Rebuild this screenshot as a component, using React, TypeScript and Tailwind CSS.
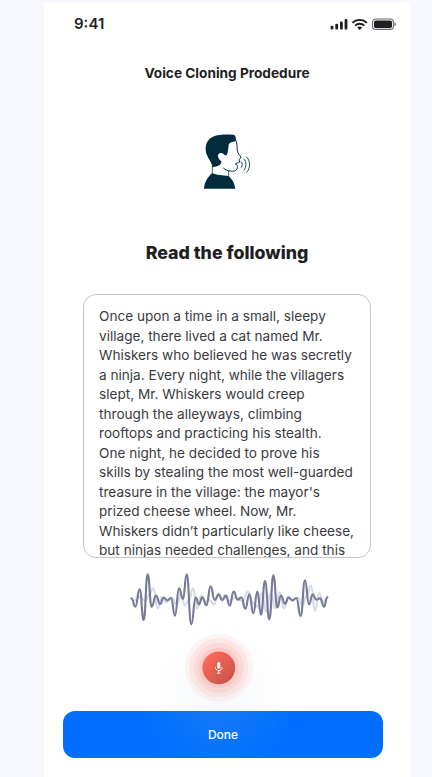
type Point = [number, number];

const mainWave: Point[] = [
  [34, 100], [46, 125], [59, 73], [71, 165], [83, 28], [95, 125], [108, 92], [120, 117], [131, 98], [142, 106],
  [153, 99], [165, 152], [177, 70], [189, 102], [200, 28], [214, 178], [227, 98], [237, 118], [247, 97], [259, 121],
  [272, 64], [284, 105], [296, 89], [307, 105], [318, 92], [329, 122], [341, 80], [353, 104], [364, 97], [376, 131],
  [388, 88], [400, 145], [412, 80], [423, 149], [435, 48], [448, 163], [460, 31], [472, 127], [483, 92], [495, 116],
  [506, 98], [517, 106], [529, 99], [542, 153], [555, 46], [567, 118], [578, 88], [589, 104], [600, 100], [612, 125], [622, 97],
];

const echoWave: Point[] = [
  [40, 108], [60, 95], [75, 108], [87, 90], [100, 70], [113, 130], [125, 97], [138, 112], [155, 98], [170, 118],
  [183, 90], [195, 120], [207, 105], [219, 70], [232, 130], [243, 92], [256, 112], [268, 105], [282, 118], [296, 85],
  [306, 108], [314, 90], [326, 108], [346, 98], [366, 108], [384, 80], [398, 112], [412, 125], [427, 85], [438, 140],
  [452, 85], [466, 130], [479, 83], [492, 130], [504, 95], [516, 106], [535, 98], [547, 120], [560, 92], [573, 62],
  [585, 138], [597, 85], [610, 112], [620, 100],
];

function wavePath(points: Point[]) {
  return points
    .map(([x, y], i) => {
      if (i === 0) return `M${x} ${y}`;
      const [px, py] = points[i - 1];
      const mid = (px + x) / 2;
      return `C${mid} ${py} ${mid} ${y} ${x} ${y}`;
    })
    .join("");
}

function StatusIcons() {
  return (
    <svg className="mt-[15px] h-[14px] w-[68px]" viewBox="0 0 68 14" fill="#1f1f24">
      <rect x="0.6" y="8.8" width="2.8" height="3.6" rx="1" />
      <rect x="5.3" y="6.8" width="2.8" height="5.6" rx="1" />
      <rect x="10" y="4.5" width="2.8" height="7.9" rx="1" />
      <rect x="14.6" y="2" width="2.8" height="10.4" rx="1" />
      <g fill="none" stroke="#1f1f24" strokeWidth="1.8">
        <path d="M22.4 5.9C26.4 1.8 33 1.8 37 5.9" />
        <path d="M25.1 8.7C27.7 6.1 31.7 6.1 34.3 8.7" />
      </g>
      <path d="M27.2 10.4C28.6 9.1 30.8 9.1 32.2 10.4L29.7 13Z" />
      <rect x="42.6" y="2" width="20.8" height="10.4" rx="3.2" fill="none" stroke="#68686d" strokeWidth="1.1" />
      <rect x="44" y="3.5" width="18" height="7.4" rx="1.7" />
      <path d="M64.5 5.3C66.4 6 66.4 8.6 64.5 9.3Z" fill="#68686d" />
    </svg>
  );
}

function SpeakerIcon() {
  return (
    <svg className="mt-[42px] ml-[146px] h-[70px] w-[70px] shrink-0" viewBox="0 0 210 210" fill="none">
      <path
        d="M68 127C65 113 57 105 51 91C44 73 46 52 61 40C77 27 103 28 130 29C136 30 138 36 138 47C131 50 121 51 117 56C114 66 116 81 109 92C106 91 104 88 102 90C101 85 95 83 89 85C82 88 83 97 89 104C91 108 95 106 94 112C92 121 84 124 69 127Z"
        fill="#022c3b"
      />
      <path d="M42 191C43 172 53 156 67 144C79 151 99 151 116 153C127 163 134 175 136 191Z" fill="#022c3b" />
      <g stroke="#022c3b" strokeWidth="3" strokeLinecap="round" strokeLinejoin="round">
        <path d="M67 124V145M116 138V152" strokeWidth="2.2" />
        <path d="M138 47C142 57 141 66 142 77C144 87 150 91 153 96C154 101 148 101 147 105L149 111C146 115 139 113 136 117C142 119 143 123 142 128C140 140 130 139 121 138C112 137 107 135 101 130" />
        <path d="M153 110C158 114 158 122 154 127M162 102C170 110 170 126 162 135M170 96C182 109 182 129 170 142" strokeWidth="2.6" />
      </g>
    </svg>
  );
}

function Waveform() {
  return (
    <svg className="mt-[7px] ml-[76px] h-[65px] w-[220px] shrink-0" viewBox="0 0 660 195" fill="none" strokeLinecap="round" strokeLinejoin="round" strokeWidth="6.4">
      <path d={wavePath(echoWave)} stroke="#d9dae3" />
      <path d={wavePath(mainWave)} stroke="#777b99" />
    </svg>
  );
}

function RecordButton() {
  return (
    <button aria-label="Record" className="mt-[3px] ml-[140px] h-[70px] w-[70px] shrink-0">
      <svg className="h-full w-full" viewBox="0 0 70 70">
        <defs>
          <linearGradient id="record" x1="0.1" y1="0.1" x2="0.85" y2="0.9">
            <stop stopColor="#fe6b5b" />
            <stop offset="1" stopColor="#cb544b" />
          </linearGradient>
        </defs>
        <g fill="#ff5447">
          <circle cx="34.8" cy="34.8" r="34" fillOpacity="0.06" />
          <circle cx="34.8" cy="34.8" r="29.5" fillOpacity="0.07" />
          <circle cx="34.8" cy="34.8" r="24.8" fillOpacity="0.09" />
          <circle cx="34.8" cy="34.8" r="20.3" fillOpacity="0.1" />
        </g>
        <circle cx="34.8" cy="34.8" r="16.4" fill="url(#record)" />
        <rect x="33.3" y="29" width="3" height="6.8" rx="1.5" fill="#fff" />
        <path d="M31.4 34.3C31.4 38.6 38.2 38.6 38.2 34.3M34.8 37.6V40.1M33.2 40.2H36.4" fill="none" stroke="#fff" strokeWidth="1" />
      </svg>
    </button>
  );
}

export default function App() {
  return (
    <div className="h-[777px] w-[432px] overflow-hidden bg-[#f8f9ff] pt-[2px] pl-[44px] font-['Inter',sans-serif] text-[#1f1f23]">
      <main className="flex h-[775px] w-[366px] flex-col bg-white bg-[radial-gradient(circle_at_175px_690px,#f6f8fa_0px,#ffffff_72px)]">
        <header className="flex h-[42px] shrink-0 justify-between pr-[12px] pl-[30px]">
          <time className="mt-[12px] text-[15px] leading-5 font-semibold">9:41</time>
          <StatusIcons />
        </header>
        <h1 className="mt-[19px] h-5 shrink-0 text-center text-[13.65px] leading-5 font-bold whitespace-nowrap">Voice Cloning Prodedure</h1>
        <SpeakerIcon />
        <h2 className="mt-[44px] h-7 shrink-0 text-center text-[17.8px] leading-7 font-extrabold whitespace-nowrap">Read the following</h2>
        <section className="mt-[27px] ml-[39px] h-[264px] w-[288px] shrink-0 overflow-hidden rounded-[13px] border border-[#c5c5c9] bg-white pt-[12px] pl-[15px] text-[13.6px] leading-[19.5px] whitespace-pre text-[#3a3a40]">
          {`Once upon a time in a small, sleepy
village, there lived a cat named Mr.
Whiskers who believed he was secretly
a ninja. Every night, while the villagers
slept, Mr. Whiskers would creep
through the alleyways, climbing
rooftops and practicing his stealth.
One night, he decided to prove his
skills by stealing the most well-guarded
treasure in the village: the mayor's
prized cheese wheel. Now, Mr.
Whiskers didn’t particularly like cheese,
but ninjas needed challenges, and this`}
        </section>
        <Waveform />
        <RecordButton />
        <button className="mt-[8px] ml-[19px] h-[47px] w-[320px] shrink-0 rounded-[12px] bg-[#006fff] bg-[radial-gradient(circle_at_156px_-8px,#187af5_0px,#006fff_75px)] text-[12px] font-medium text-white">
          Done
        </button>
      </main>
    </div>
  );
}
